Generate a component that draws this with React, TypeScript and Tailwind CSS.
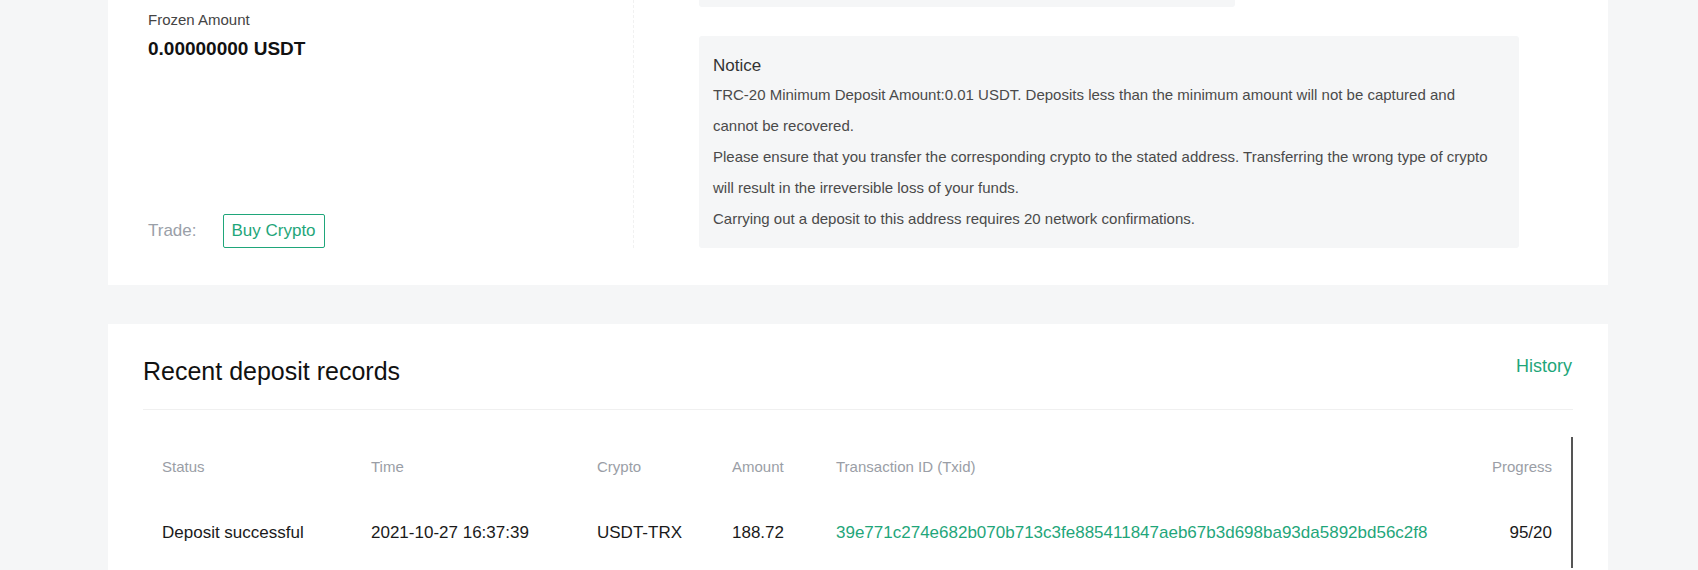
const notice = [
  'TRC-20 Minimum Deposit Amount:0.01 USDT. Deposits less than the minimum amount will not be captured and',
  'cannot be recovered.',
  'Please ensure that you transfer the corresponding crypto to the stated address. Transferring the wrong type of crypto',
  'will result in the irreversible loss of your funds.',
  'Carrying out a deposit to this address requires 20 network confirmations.',
]

const records = [
  {
    status: 'Deposit successful',
    time: '2021-10-27 16:37:39',
    crypto: 'USDT-TRX',
    amount: '188.72',
    txid: '39e771c274e682b070b713c3fe885411847aeb67b3d698ba93da5892bd56c2f8',
    progress: '95/20',
  },
]

const cols = 'grid grid-cols-[209px_226px_135px_104px_1fr_140px]'

const App = () => {
  return (
    <div className="min-h-screen bg-[#f5f6f7] pl-[108px] font-['Liberation_Sans',Arial,sans-serif]">
      <div className="w-[1500px]">
        {/* asset card, scrolled so only its lower part shows */}
        <div className="flex bg-white pb-[37px]">
          <div className="flex h-[247px] w-[525px] flex-col pl-[40px]">
            <div className="mt-[10px] text-[15px] leading-[20px] text-[#444]">Frozen Amount</div>
            <div className="mt-[7px] text-[19px] font-bold leading-[23px] text-[#111]">0.00000000 USDT</div>
            <div className="mt-auto flex items-center">
              <span className="text-[17px] text-[#9aa0a8]">Trade:</span>
              <button className="ml-[26px] mb-[-1px] h-[34px] w-[102px] rounded-[2px] border border-[#1fa67a] text-[17px] text-[#1fa67a]">
                Buy Crypto
              </button>
            </div>
          </div>
          <div className="flex flex-col border-l border-dashed border-[#f1f1f1] pl-[65px]">
            <div className="h-[7px] w-[536px] rounded-b-[3px] bg-[#f5f6f7]" />
            <div className="mt-[29px] h-[212px] w-[820px] rounded-[3px] bg-[#f5f6f7] px-[14px] pt-[18px]">
              <div className="text-[17px] leading-[24px] text-[#333]">Notice</div>
              <div className="mt-[1px] text-[15px] leading-[31px] text-[#4a4a4a]">
                {notice.map((line, i) => (
                  <div key={i} className="whitespace-nowrap">
                    {line}
                  </div>
                ))}
              </div>
            </div>
          </div>
        </div>

        {/* recent deposits */}
        <div className="mt-[39px] bg-white px-[35px] pb-[20px] pt-[30px]">
          <div className="flex items-start justify-between border-b border-[#f0f0f0] pb-[23px]">
            <h2 className="mt-[2px] text-[25px] leading-[30px] text-[#111]">Recent deposit records</h2>
            <a className="mr-[1px] text-[18px] leading-[24px] text-[#1fa67a]">History</a>
          </div>
          <div className="mt-[27px] border-r-2 border-[#555]">
            <div className={`${cols} h-[61px] items-center text-[15px] text-[#9a9ea6]`}>
              <div className="pl-[19px]">Status</div>
              <div className="pl-[19px]">Time</div>
              <div className="pl-[19px]">Crypto</div>
              <div className="pl-[19px]">Amount</div>
              <div className="pl-[19px]">Transaction ID (Txid)</div>
              <div className="pr-[19px] text-right">Progress</div>
            </div>
            {records.map((r) => (
              <div key={r.txid} className={`${cols} h-[70px] items-center text-[17px] text-[#1a1a1a]`}>
                <div className="pl-[19px]">{r.status}</div>
                <div className="pl-[19px]">{r.time}</div>
                <div className="pl-[19px]">{r.crypto}</div>
                <div className="pl-[19px]">{r.amount}</div>
                <div className="pl-[19px] text-[#1fa67a]">{r.txid}</div>
                <div className="pr-[19px] text-right">{r.progress}</div>
              </div>
            ))}
          </div>
        </div>
      </div>
    </div>
  )
}

export default App
